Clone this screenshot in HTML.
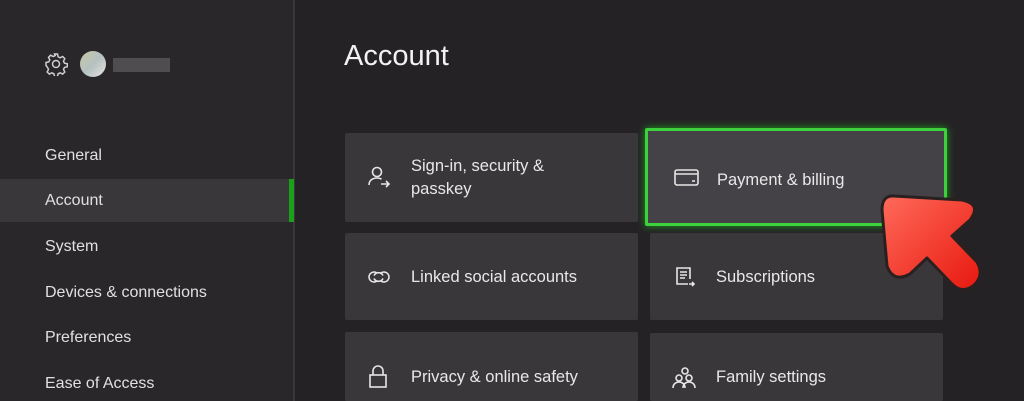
<!DOCTYPE html>
<html style="width:1024px;height:401px;overflow:hidden"><head><style>
*{margin:0;padding:0;box-sizing:border-box}
body{width:1024px;height:401px;overflow:hidden;background:#252225;font-family:"Liberation Sans",sans-serif;color:#e6e6e6;position:relative}
.side{position:absolute;left:0;top:0;width:295px;height:401px;background:#2a272a;border-right:2px solid #3a373a}
.nav{position:absolute;left:45px;font-size:16px;color:#e0e0e0}
.sel{position:absolute;left:0;top:179px;width:295px;height:43px;background:#3a373b}
.bar{position:absolute;left:289px;top:179px;width:5px;height:43px;background:#1aa11a}
.card{position:absolute;background:#3a373b;border-radius:2px}
.t{position:absolute;left:66px;font-size:16.5px;color:#e8e8e8;line-height:23px}
svg.i{position:absolute;left:22px;fill:none;stroke:#e6e6e6;stroke-width:1.6}
</style></head><body>
<div class="side">
<svg style="position:absolute;left:44px;top:52px" width="24" height="24" viewBox="0 0 24 24" fill="none" stroke="#cfcfcf" stroke-width="1.5"><circle cx="12" cy="12" r="3.5"/><path d="M10.5 2h3l.6 2.8 2 1 2.6-1.3 2.1 2.1-1.3 2.6 1 2 2.8.6v3l-2.8.6-1 2 1.3 2.6-2.1 2.1-2.6-1.3-2 1-.6 2.8h-3l-.6-2.8-2-1-2.6 1.3-2.1-2.1 1.3-2.6-1-2L2 13.5v-3l2.8-.6 1-2-1.3-2.6 2.1-2.1 2.6 1.3 2-1z"/></svg>
<div style="position:absolute;left:80px;top:51px;width:26px;height:26px;border-radius:50%;background:linear-gradient(135deg,#c9c8a6,#b5c0c0 50%,#e5e5e0)"></div>
<div style="position:absolute;left:113px;top:58px;width:57px;height:14px;background:#5a575b;opacity:.8"></div>
<div class="sel"></div><div class="bar"></div>
<div class="nav" style="top:147px">General</div>
<div class="nav" style="top:192px">Account</div>
<div class="nav" style="top:238px">System</div>
<div class="nav" style="top:284px">Devices &amp; connections</div>
<div class="nav" style="top:329px">Preferences</div>
<div class="nav" style="top:375px">Ease of Access</div>
</div>
<div style="position:absolute;left:344px;top:40px;font-size:29px;color:#f2f2f2">Account</div>

<div class="card" style="left:345px;top:133px;width:293px;height:89px">
<svg class="i" style="top:32px" width="26" height="26" viewBox="0 0 26 26"><circle cx="10" cy="7" r="4.5"/><path d="M2 20c0-5 4-7 8-7 2 0 3.5.5 4.5 1.2M14 19h8M19 16l3 3-3 3"/></svg>
<div class="t" style="top:22px">Sign-in, security &amp;<br>passkey</div></div>
<div class="card" style="left:645px;top:128px;width:302px;height:98px;background:#454247;border:3px solid #3ed13e;box-shadow:0 0 8px #1c9e1c">
<svg class="i" style="top:37px;left:26px" width="26" height="20" viewBox="0 0 26 20"><rect x="1" y="2" width="23" height="15" rx="2"/><path d="M1 6h23M18 13h3"/></svg>
<div class="t" style="top:38px;left:69px">Payment &amp; billing</div></div>

<div class="card" style="left:345px;top:233px;width:293px;height:87px">
<svg class="i" style="top:34px" width="26" height="20" viewBox="0 0 26 20"><path d="M10 6a5 5 0 1 0 0 8M14 6a5 5 0 1 1 0 8M7 8.5a5 5 0 0 1 9 0M7 11.5a5 5 0 0 0 9 0"/></svg>
<div class="t" style="top:33px">Linked social accounts</div></div>
<div class="card" style="left:650px;top:233px;width:293px;height:87px">
<svg class="i" style="top:33px;left:24px" width="24" height="24" viewBox="0 0 24 24"><path d="M14 18H3V2h13v11M6 6h7M6 9h7M6 12h5M15 18h5M18 16l2 2-2 2"/></svg>
<div class="t" style="top:33px">Subscriptions</div></div>

<div class="card" style="left:345px;top:332px;width:293px;height:69px">
<svg class="i" style="top:32px" width="24" height="26" viewBox="0 0 24 26"><rect x="3" y="11" width="16" height="12"/><path d="M6 11V7a5 5 0 0 1 10 0v4"/></svg>
<div class="t" style="top:34px">Privacy &amp; online safety</div></div>
<div class="card" style="left:650px;top:333px;width:293px;height:68px">
<svg class="i" style="top:33px" width="26" height="24" viewBox="0 0 26 24"><circle cx="13" cy="5" r="3"/><circle cx="7" cy="12" r="3"/><circle cx="17" cy="12" r="3"/><path d="M1 22c0-4 3-6 6-6s6 2 6 6M11 22c0-4 3-6 6-6s6 2 6 6"/></svg>
<div class="t" style="top:33px">Family settings</div></div>

<svg style="position:absolute;left:0;top:0" width="1024" height="401">
<defs><linearGradient id="g" x1="0" y1="0" x2="1" y2="1"><stop offset="0" stop-color="#ff6a5a"/><stop offset="1" stop-color="#e8180f"/></linearGradient></defs>
<path d="M894 196 L962 200 Q982 204 970 220 L952 236 L977 262 Q985 276 973 286 Q962 294 952 284 L927 258 L910 274 Q893 283 887 266 L882 210 Q882 195 894 196Z" fill="url(#g)" stroke="#2a2020" stroke-width="3" stroke-linejoin="round"/>
</svg>
</body></html>
